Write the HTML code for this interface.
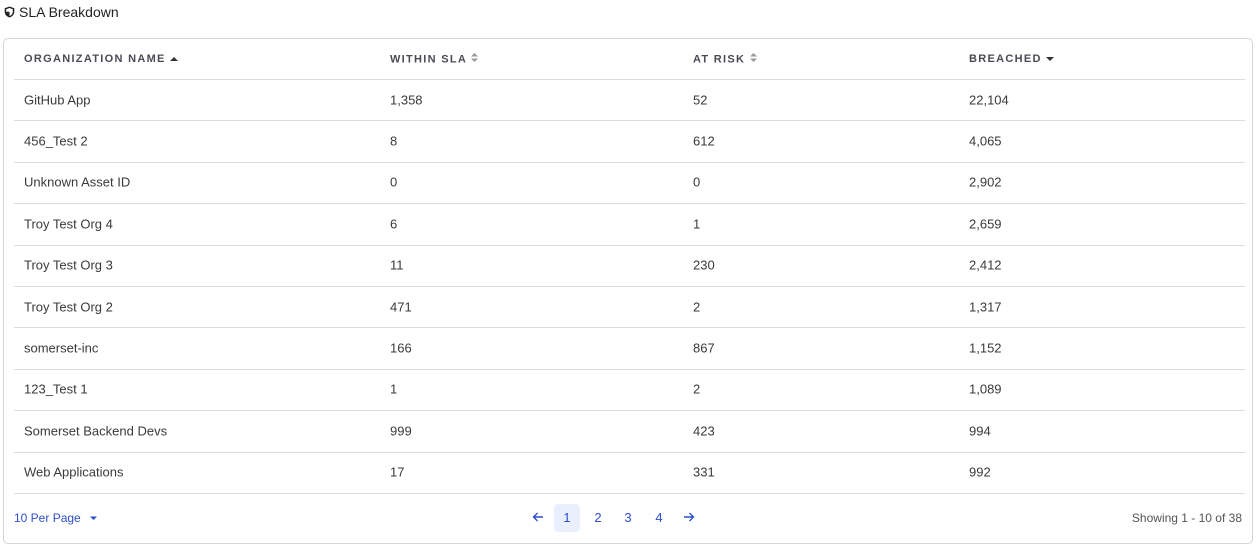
<!DOCTYPE html>
<html><head><style>
body{margin:0;background:#fff;font-family:"Liberation Sans",Arial,sans-serif;color:#333;width:1259px;height:550px;overflow:hidden;position:relative}
.title{position:absolute;left:4px;top:4px;font-size:14px;color:#222;display:flex;align-items:center;gap:4px}
.card{position:absolute;left:3px;top:38px;width:1250px;height:506px;border:1px solid #d6d6da;border-radius:5px;box-sizing:border-box}
.row{position:absolute;left:10px;width:1231px;border-bottom:1px solid #dcdce0;font-size:13px;color:#3a3a3a}
.row>span{position:absolute;top:50%;transform:translateY(-50%)}
.hd{font-size:11px;font-weight:bold;letter-spacing:1.3px;color:#4a4a55}
.c1{left:10px}.c2{left:376px}.c3{left:679px}.c4{left:955px}
.foot{position:absolute;top:472px;font-size:12px}
.pg{position:absolute;top:465px;font-size:13px;color:#2d4fc9;width:26px;height:28px;line-height:28px;text-align:center;border-radius:4px}
.ar{font-size:16px}
</style></head><body>
<div class="title"><svg width="11" height="12" viewBox="0 0 11 12"><path d="M5.5 0.5L10.3 2.3V5.8C10.3 8.6 8.2 10.7 5.5 11.5C2.8 10.7 0.7 8.6 0.7 5.8V2.3Z" fill="#222"/><path d="M5.5 2L8.8 3.3V5.8C8.8 7.8 7.4 9.4 5.5 10V2Z" fill="#fff"/><path d="M5.5 2L2.2 3.3V5.8H5.5Z" fill="#fff"/></svg>SLA Breakdown</div>
<div class="card">
<div class="row hd" style="top:0;height:40px"><span class="c1">ORGANIZATION NAME <svg width="8" height="6" viewBox="0 0 8 6"><path d="M0 5L4 1L8 5Z" fill="#333"/></svg></span><span class="c2">WITHIN SLA <svg width="7" height="10" viewBox="0 0 7 10"><path d="M0 4L3.5 0.5L7 4ZM0 6L3.5 9.5L7 6Z" fill="#999"/></svg></span><span class="c3">AT RISK <svg width="7" height="10" viewBox="0 0 7 10"><path d="M0 4L3.5 0.5L7 4ZM0 6L3.5 9.5L7 6Z" fill="#999"/></svg></span><span class="c4">BREACHED <svg width="8" height="6" viewBox="0 0 8 6"><path d="M0 1L4 5L8 1Z" fill="#333"/></svg></span></div>
<div class="row" style="top:40px;height:41.4px"><span class="c1">GitHub App</span><span class="c2">1,358</span><span class="c3">52</span><span class="c4">22,104</span></div>
<div class="row" style="top:81.4px;height:41.4px"><span class="c1">456_Test 2</span><span class="c2">8</span><span class="c3">612</span><span class="c4">4,065</span></div>
<div class="row" style="top:122.8px;height:41.4px"><span class="c1">Unknown Asset ID</span><span class="c2">0</span><span class="c3">0</span><span class="c4">2,902</span></div>
<div class="row" style="top:164.2px;height:41.4px"><span class="c1">Troy Test Org 4</span><span class="c2">6</span><span class="c3">1</span><span class="c4">2,659</span></div>
<div class="row" style="top:205.6px;height:41.4px"><span class="c1">Troy Test Org 3</span><span class="c2">11</span><span class="c3">230</span><span class="c4">2,412</span></div>
<div class="row" style="top:247px;height:41.4px"><span class="c1">Troy Test Org 2</span><span class="c2">471</span><span class="c3">2</span><span class="c4">1,317</span></div>
<div class="row" style="top:288.4px;height:41.4px"><span class="c1">somerset-inc</span><span class="c2">166</span><span class="c3">867</span><span class="c4">1,152</span></div>
<div class="row" style="top:329.8px;height:41.4px"><span class="c1">123_Test 1</span><span class="c2">1</span><span class="c3">2</span><span class="c4">1,089</span></div>
<div class="row" style="top:371.2px;height:41.4px"><span class="c1">Somerset Backend Devs</span><span class="c2">999</span><span class="c3">423</span><span class="c4">994</span></div>
<div class="row" style="top:412.6px;height:41.4px"><span class="c1">Web Applications</span><span class="c2">17</span><span class="c3">331</span><span class="c4">992</span></div>
<div class="foot" style="left:10px;color:#2d4fc9">10 Per Page <svg width="7" height="5" viewBox="0 0 7 5" style="margin-left:6px;vertical-align:1px"><path d="M0 0.5L3.5 4L7 0.5Z" fill="#2d4fc9"/></svg></div>
<div class="pg" style="left:521px"><svg width="12" height="10" viewBox="0 0 12 10"><path d="M11 5H1.5M5.5 1L1.5 5L5.5 9" stroke="#2d4fc9" stroke-width="1.4" fill="none"/></svg></div>
<div class="pg" style="left:550px;background:#e9effd">1</div>
<div class="pg" style="left:581px">2</div>
<div class="pg" style="left:611px">3</div>
<div class="pg" style="left:642px">4</div>
<div class="pg" style="left:672px"><svg width="12" height="10" viewBox="0 0 12 10"><path d="M1 5H10.5M6.5 1L10.5 5L6.5 9" stroke="#2d4fc9" stroke-width="1.4" fill="none"/></svg></div>
<div class="foot" style="right:10px;color:#555">Showing 1 - 10 of 38</div>
</div>
</body></html>
